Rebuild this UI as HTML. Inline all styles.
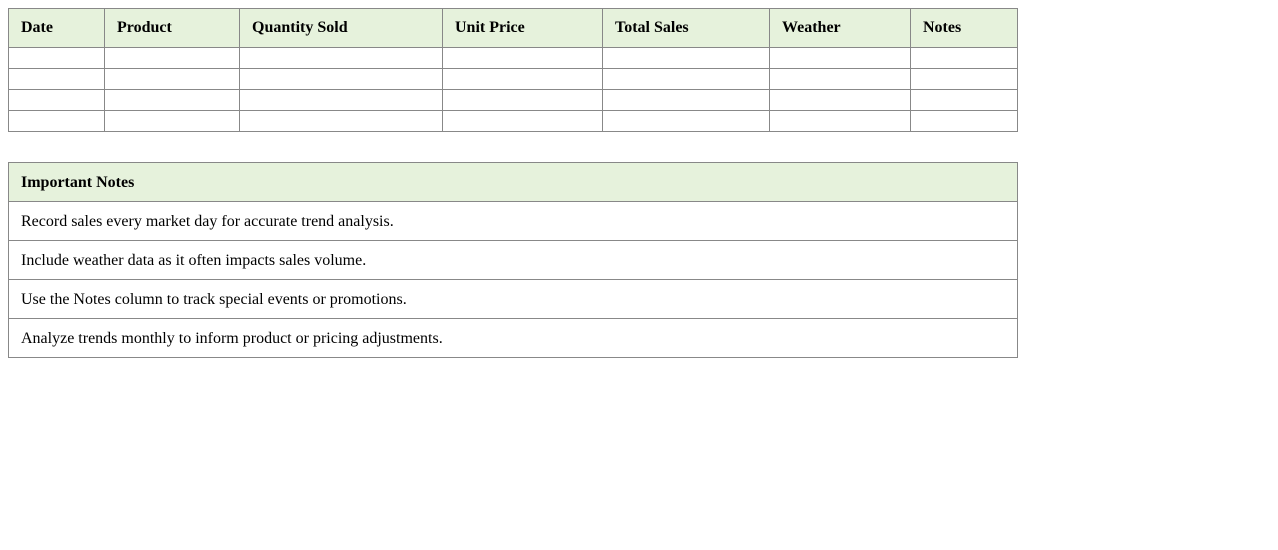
<!DOCTYPE html>
<html><head><style>
body{margin:0;background:#fff;font-family:"Liberation Serif",serif;font-size:16px;color:#000}
table{border-collapse:collapse;position:absolute;left:8px;table-layout:fixed}
td,th{border:1px solid #888;padding:0 0 0 12px;text-align:left}
th{background:#e6f2dc;font-weight:bold;height:38px;font-size:16px}
#t1{top:8px;width:1009px}
#t1 td{height:20px}
#t2{top:162px;width:1010px}
#t2 td{height:37px;padding-top:1px}
#t2 th{height:37px;padding-top:1px}
</style></head><body>
<table id="t1">
<colgroup><col style="width:96px"><col style="width:135px"><col style="width:203px"><col style="width:160px"><col style="width:167px"><col style="width:141px"><col style="width:107px"></colgroup>
<tr><th>Date</th><th>Product</th><th>Quantity Sold</th><th>Unit Price</th><th>Total Sales</th><th>Weather</th><th>Notes</th></tr>
<tr><td></td><td></td><td></td><td></td><td></td><td></td><td></td></tr>
<tr><td></td><td></td><td></td><td></td><td></td><td></td><td></td></tr>
<tr><td></td><td></td><td></td><td></td><td></td><td></td><td></td></tr>
<tr><td></td><td></td><td></td><td></td><td></td><td></td><td></td></tr>
</table>
<table id="t2">
<tr><th>Important Notes</th></tr>
<tr><td>Record sales every market day for accurate trend analysis.</td></tr>
<tr><td>Include weather data as it often impacts sales volume.</td></tr>
<tr><td>Use the Notes column to track special events or promotions.</td></tr>
<tr><td>Analyze trends monthly to inform product or pricing adjustments.</td></tr>
</table>
</body></html>
